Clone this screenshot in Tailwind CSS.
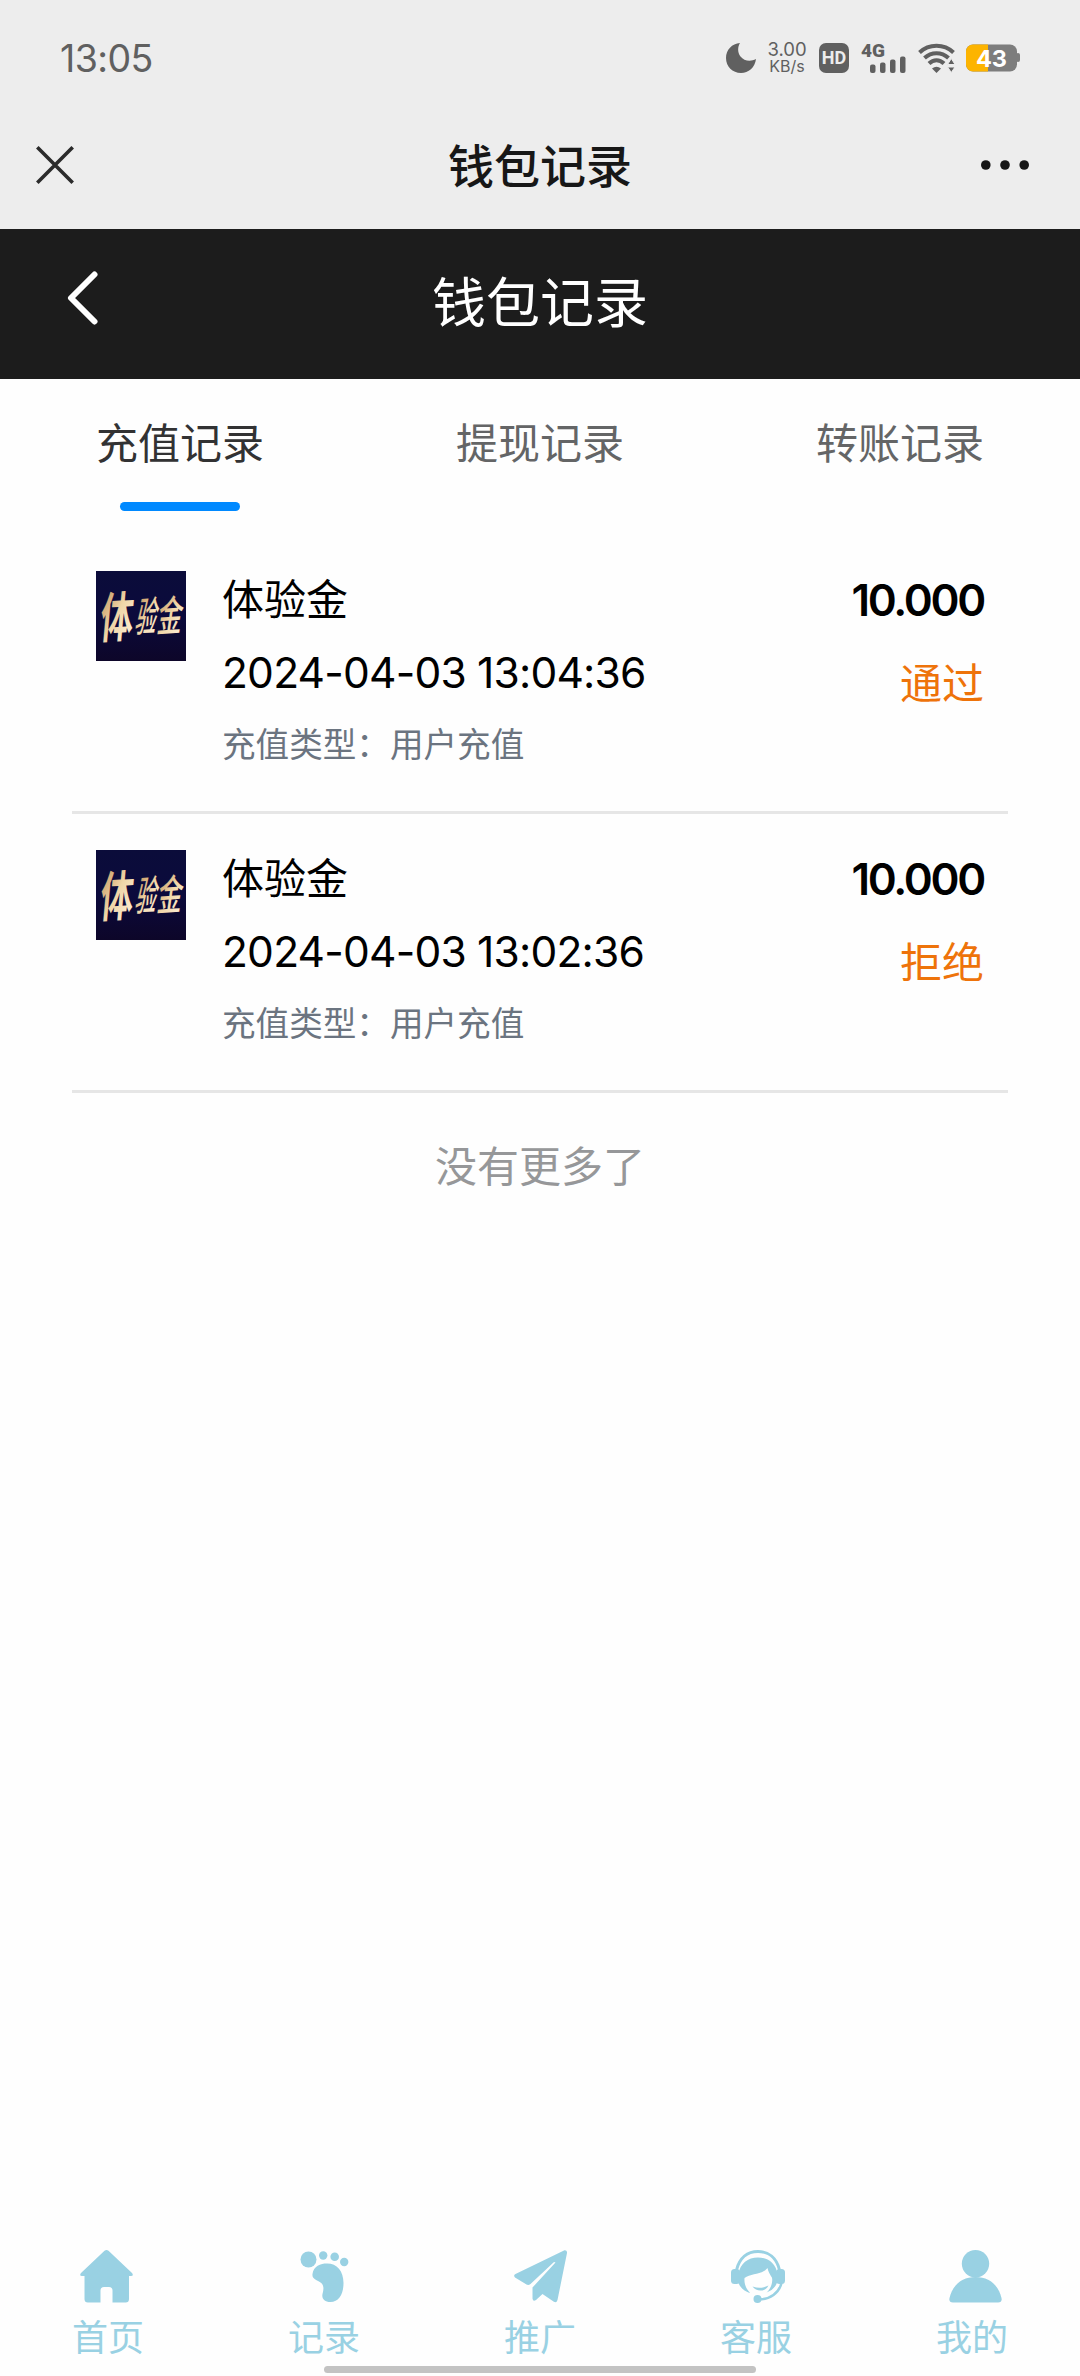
<!DOCTYPE html>
<html lang="zh-CN">
<head>
<meta charset="utf-8">
<title>钱包记录</title>
<script src="https://cdn.jsdelivr.net/npm/@tailwindcss/browser@4"></script>
</head>
<body class="bg-[#fefefe]">
<div class="flex h-[2376px] w-[1080px] flex-col overflow-hidden bg-[#fefefe] font-[Inter,'Noto_Sans_CJK_SC',sans-serif] text-black">

  <!-- system status bar -->
  <div class="flex h-[116px] shrink-0 items-center bg-[#ededed] pl-[60px] pr-[60px] text-[#606060]">
    <span class="pt-[1px] text-[37.500px] leading-none tracking-[-0.600px]">13:05</span>
    <div class="ml-auto flex items-center">
      <svg class="h-[30px] w-[30px]" viewBox="0 0 30 30" fill="#606060"><path d="M14 0C11.500 4 11.500 9.500 14.500 13.500C18 18 24.500 19 30 16C29 24.500 22.500 30 15 30C6.500 30 0 23.500 0 15C0 7 6 0.500 14 0Z"/></svg>
      <div class="ml-[12px] flex w-[38px] flex-col items-center leading-[17px]">
        <span class="text-[18.500px]">3.00</span>
        <span class="text-[16px]">KB/s</span>
      </div>
      <div class="ml-[13px] flex h-[30px] w-[30px] items-center justify-center rounded-[7px] bg-[#606060] font-['Roboto'] text-[18px] leading-none font-bold text-[#ededed]">HD</div>
      <svg class="ml-[12px] h-[30px] w-[45px] overflow-visible" viewBox="0 0 45 30" fill="#606060">
        <text x="0" y="14" font-family="Roboto" font-weight="900" font-size="19" textLength="24" lengthAdjust="spacingAndGlyphs">4G</text>
        <rect x="9" y="21.500" width="5.500" height="8.500" rx="2"/><rect x="19" y="19.500" width="5.500" height="10.500" rx="2"/><rect x="29" y="16.500" width="5.500" height="13.500" rx="2"/><rect x="39" y="13.500" width="5.500" height="16.500" rx="2"/>
      </svg>
      <svg class="ml-[12px] h-[30px] w-[37px]" viewBox="0 0 37 30" fill="none" stroke="#606060" stroke-width="4">
        <path d="M1.500 9.500C11 0.500 26 0.500 35.500 9.500"/><path d="M6.500 15C13.500 8.500 23.500 8.500 30.500 15"/><path d="M11 20.500C15.500 16 21.500 16 26 20.500"/>
        <path d="M14 25.500Q18.500 22 23 25.500L18.500 30Z" fill="#606060" stroke="none"/>
        <path d="M33.300 15.500L37 21.500H29.600ZM33.300 29.500L37 24H29.600Z" fill="#606060" stroke="#ededed" stroke-width="1"/>
      </svg>
      <svg class="ml-[11px] h-[28px] w-[54px]" viewBox="0 0 54 28">
        <rect x="50" y="9" width="4" height="9" rx="2" fill="#7d7d7d"/>
        <rect x="0" y="0.500" width="51" height="27" rx="7" fill="#7d7d7d"/>
        <path d="M22 0.500H7A7 7 0 0 0 0 7.500V20.500A7 7 0 0 0 7 27.500H22Z" fill="#fdb400"/>
        <text x="25.500" y="22.500" text-anchor="middle" font-family="Inter" font-weight="700" font-size="23.500" fill="#fff">43</text>
      </svg>
    </div>
  </div>

  <!-- host browser title bar -->
  <div class="grid h-[113px] shrink-0 grid-cols-3 items-center bg-[#ededed] px-[36px] pb-[15px] text-[#171717]">
    <svg class="h-[38px] w-[38px]" viewBox="0 0 38 38" fill="none" stroke="#2b2b2b" stroke-width="3.600"><path d="M1.300 1.300L36.700 36.700M36.700 1.300L1.300 36.700"/></svg>
    <h1 class="pt-[2px] text-center text-[46px] leading-none font-medium">钱包记录</h1>
    <svg class="ml-auto mr-[15px] h-[10px] w-[48px]" viewBox="0 0 48 10" fill="#171717"><circle cx="4.800" cy="5" r="4.800"/><circle cx="24" cy="5" r="4.800"/><circle cx="43.200" cy="5" r="4.800"/></svg>
  </div>

  <!-- page header -->
  <div class="grid h-[150px] shrink-0 grid-cols-3 items-center bg-[#1c1c1c] px-[67px] pb-[12px] text-white">
    <svg class="h-[54px] w-[32px]" viewBox="0 0 32 54" fill="none" stroke="#fff" stroke-width="6" stroke-linecap="round" stroke-linejoin="round"><path d="M27.500 3.500L4 27L27.500 50.500"/></svg>
    <h2 class="pt-[11px] text-center text-[54px] leading-none whitespace-nowrap">钱包记录</h2>
  </div>

  <!-- record type tabs -->
  <div class="grid h-[144px] shrink-0 grid-cols-3 text-center text-[42px] leading-[130px] text-[#646566]">
    <div class="flex flex-col items-center text-[#323233]"><span class="h-[123px]">充值记录</span><i class="h-[9px] w-[120px] rounded-full bg-[#0089ff]"></i></div>
    <div>提现记录</div>
    <div>转账记录</div>
  </div>

  <!-- records -->
  <div class="flex flex-col px-[72px]">
    <div class="flex h-[291px] shrink-0 border-b-[3px] border-[#e6e6e6] px-[24px] pt-[48px]">
      <svg class="h-[90px] w-[90px] shrink-0" viewBox="0 0 90 90">
        <defs><linearGradient id="navy" x1="0" y1="0" x2="0" y2="1"><stop offset="0" stop-color="#0b0c3a"/><stop offset="0.500" stop-color="#0b0a3c"/><stop offset="1" stop-color="#0d0629"/></linearGradient>
        <linearGradient id="gold" x1="0" y1="0" x2="1" y2="1"><stop offset="0" stop-color="#b98750"/><stop offset="0.500" stop-color="#f0d6a8"/><stop offset="1" stop-color="#fff3df"/></linearGradient></defs>
        <rect width="90" height="90" fill="url(#navy)"/>
        <g fill="url(#gold)" font-family="'Noto Sans CJK SC'">
          <text transform="translate(3 67) rotate(-3) skewX(-8) scale(0.660 1.080)" font-size="50" font-weight="700">体</text>
          <text transform="translate(38 61) rotate(-3) skewX(-14) scale(0.580 1.100)" font-size="37" font-weight="500">验</text>
          <text transform="translate(60 61) rotate(-4) skewX(-12) scale(0.700 1.150)" font-size="36" font-weight="500">金</text>
        </g>
      </svg>
      <div class="ml-[36px] flex flex-col">
        <span class="h-[60px] text-[42px] leading-[58px]">体验金</span>
        <span class="mt-[12px] h-[60px] text-[42.500px] leading-[60px] tracking-[-0.800px] whitespace-nowrap">2024-04-03 13:04:36</span>
        <span class="mt-[18px] h-[48px] text-[33.600px] leading-[47px] text-[#6b7480]">充值类型：用户充值</span>
      </div>
      <div class="ml-auto flex flex-col items-end">
        <span class="h-[60px] text-[44px] leading-[58px] font-semibold tracking-[-2.300px]">10.000</span>
        <span class="mt-[22px] h-[60px] text-[42px] leading-[61px] text-[#ee730a]">通过</span>
      </div>
    </div>
    <div class="flex h-[279px] shrink-0 border-b-[3px] border-[#e6e6e6] px-[24px] pt-[36px]">
      <svg class="h-[90px] w-[90px] shrink-0" viewBox="0 0 90 90">
        <rect width="90" height="90" fill="url(#navy)"/>
        <g fill="url(#gold)" font-family="'Noto Sans CJK SC'">
          <text transform="translate(3 67) rotate(-3) skewX(-8) scale(0.660 1.080)" font-size="50" font-weight="700">体</text>
          <text transform="translate(38 61) rotate(-3) skewX(-14) scale(0.580 1.100)" font-size="37" font-weight="500">验</text>
          <text transform="translate(60 61) rotate(-4) skewX(-12) scale(0.700 1.150)" font-size="36" font-weight="500">金</text>
        </g>
      </svg>
      <div class="ml-[36px] flex flex-col">
        <span class="h-[60px] text-[42px] leading-[58px]">体验金</span>
        <span class="mt-[12px] h-[60px] text-[42.500px] leading-[60px] tracking-[-0.800px] whitespace-nowrap">2024-04-03 13:02:36</span>
        <span class="mt-[18px] h-[48px] text-[33.600px] leading-[47px] text-[#6b7480]">充值类型：用户充值</span>
      </div>
      <div class="ml-auto flex flex-col items-end">
        <span class="h-[60px] text-[44px] leading-[58px] font-semibold tracking-[-2.300px]">10.000</span>
        <span class="mt-[22px] h-[60px] text-[42px] leading-[61px] text-[#ee730a]">拒绝</span>
      </div>
    </div>
    <p class="text-center text-[42px] leading-[148px] text-[#969799]">没有更多了</p>
  </div>

  <!-- bottom navigation -->
  <div class="mt-auto grid h-[116px] shrink-0 grid-cols-5 text-center text-[36px] leading-[70px] text-[#99d1e3]">
    <div class="flex flex-col items-center">
      <svg class="-ml-[4px] h-[53px] w-[53px] shrink-0" viewBox="0 0 53 53" fill="#99d1e3"><path d="M24.500 0.800Q26.500 -0.800 28.500 0.800L52 23Q54 26 51 26H49V49Q49 52.500 45.500 52.500H32.500V40.500Q32.500 37 29 37H24Q20.500 37 20.500 40.500V52.500H8Q4.500 52.500 4.500 49V26H2Q-1 26 1 23Z"/></svg>
      <span>首页</span>
    </div>
    <div class="flex flex-col items-center">
      <svg class="h-[53px] w-[53px] shrink-0" viewBox="0 0 53 53" fill="#99d1e3"><circle cx="10.500" cy="9.500" r="8"/><circle cx="25.200" cy="5.500" r="4.200"/><circle cx="36.700" cy="6.800" r="4.300"/><circle cx="46.200" cy="12" r="4.200"/><path d="M14.500 24C15.500 16 22.500 13.500 29 13.500C39 13.500 45.500 21 45.500 33C45.500 44 41 52 32.500 52C26.500 52 23.500 48.500 24.500 44C26.500 37 25.500 33 19 30.500C15.500 29 14 27 14.500 24Z"/></svg>
      <span>记录</span>
    </div>
    <div class="flex flex-col items-center">
      <svg class="h-[53px] w-[53px] shrink-0" viewBox="0 0 53 53" fill="#99d1e3"><path d="M50.500 0.300Q53.300 0 53 3L43.500 50Q42.500 53.500 39.500 51.500L28.500 44L22 50Q19 52 18.500 48.500V37.500L41.500 12.500L40 12L16.500 34Q14.500 35.500 12.500 34.500L1 27.500Q-1 25.500 1.500 24Z"/></svg>
      <span>推广</span>
    </div>
    <div class="flex flex-col items-center">
      <svg class="ml-[4px] h-[53px] w-[54px] shrink-0" viewBox="0 0 54 53" fill="#99d1e3">
        <path d="M5.500 20C8.500 8 16.500 1.500 27 1.500S45.500 8 48.500 20" fill="none" stroke="#99d1e3" stroke-width="3"/>
        <rect x="0" y="19" width="9" height="15" rx="3.500"/><rect x="45" y="19" width="9" height="15" rx="3.500"/>
        <path d="M7.500 33V24C9 13.500 17 7.500 27 7.500S45 13.500 46.500 24V33H43C42 27 38 25 36.500 18C31 25 20 23 13.500 28C13 34 15 39 19.500 43C14 42 9.500 38 7.500 33Z"/>
        <path d="M41 27C42 32 40 39 35.500 42.500C41 40.500 45 37 46.500 31Z"/>
        <path d="M21.500 36.500Q30 39.500 37.500 35.500Q35 40.500 29.500 40.500Q24.500 40.500 21.500 36.500Z"/>
        <path d="M50.500 33C48 43 39 49.500 28 49.500" fill="none" stroke="#99d1e3" stroke-width="2.500"/><circle cx="26.500" cy="49" r="4"/>
      </svg>
      <span>客服</span>
    </div>
    <div class="flex flex-col items-center">
      <svg class="ml-[7px] h-[53px] w-[53px] shrink-0" viewBox="0 0 53 53" fill="#99d1e3"><circle cx="26.500" cy="13.700" r="13.700"/><path d="M0.500 48C4 34 13.500 27 26.500 27S49 34 52.500 48Q53.300 52.500 49 52.500H4Q-0.300 52.500 0.500 48Z"/></svg>
      <span>我的</span>
    </div>
  </div>
  <div class="flex h-[10px] shrink-0 justify-center"><i class="h-[7px] w-[432px] rounded-full bg-[#c3c3c3]"></i></div>
</div>
</body>
</html>
